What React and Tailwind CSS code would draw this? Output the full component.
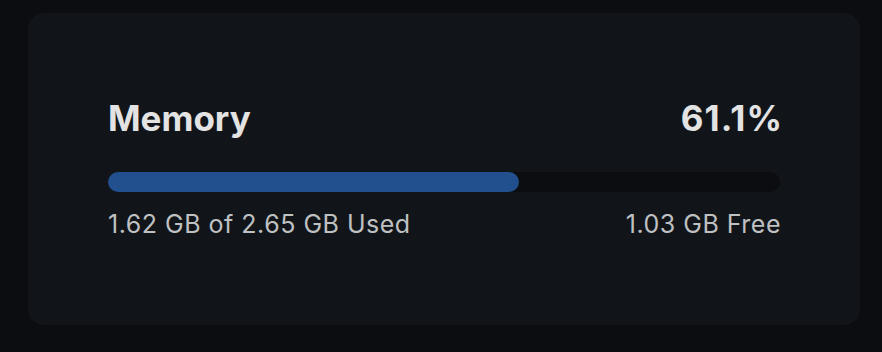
import React from "react";

const memory = {
  used: 1.62,
  total: 2.65,
  free: 1.03,
  percent: 61.1,
};

export default function App() {
  return (
    <div className="h-[352px] w-[882px] bg-[#0b0d10] pl-[28px] pr-[22px] pt-[13px] font-['Inter',sans-serif]">
      <div className="flex h-[312px] flex-col justify-center rounded-2xl bg-[#111519] px-[80px]">
        {/* Header */}
        <div className="flex items-center justify-between">
          <h2 className="text-[35px] leading-none font-bold text-[#e3e3e3]">Memory</h2>
          <span className="-mr-[3px] text-[35px] leading-none font-bold tracking-[0.03em] text-[#e3e3e3]">
            {memory.percent}%
          </span>
        </div>

        {/* Bar */}
        <div className="mt-[36px] h-[20px] w-full rounded-full bg-[#0b0d10]">
          <div
            className="h-full rounded-full bg-[#22508f]"
            style={{ width: `${memory.percent}%` }}
          />
        </div>

        {/* Footer */}
        <div className="mt-[20px] flex items-center justify-between text-[25px] leading-none tracking-[0.02em] text-[#bfc0c2]">
          <span>
            {memory.used} GB of {memory.total} GB Used
          </span>
          <span className="-mr-[1px]">{memory.free} GB Free</span>
        </div>
      </div>
    </div>
  );
}
